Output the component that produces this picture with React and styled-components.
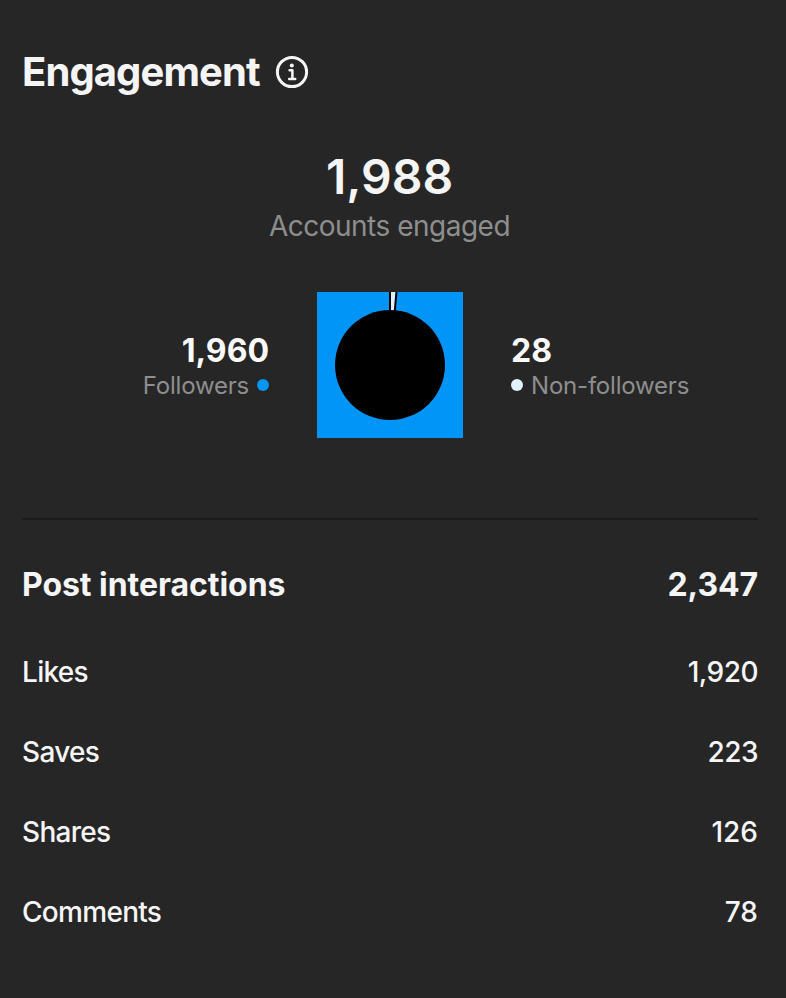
import React from 'react'
import styled, { createGlobalStyle } from 'styled-components'

const rows = [
  { label: 'Likes', value: '1,920', valueSpacing: '-0.5px' },
  { label: 'Saves', value: '223' },
  { label: 'Shares', value: '126', valueSpacing: '0' },
  { label: 'Comments', value: '78', valueSpacing: '0' },
]

const InfoIcon = () => (
  <svg width="34" height="34" viewBox="0 0 34 34" fill="none" stroke="#f5f5f5">
    <circle cx="17" cy="17" r="14.6" strokeWidth="3" />
    <circle cx="16.8" cy="10.6" r="2" fill="#f5f5f5" stroke="none" />
    <path d="M14.6 15.2h2.8v8.6M14.2 24h6" strokeWidth="2.5" strokeLinecap="round" strokeLinejoin="round" />
  </svg>
)

const Donut = () => (
  <svg width="146" height="146" viewBox="0 0 146 146">
    <rect width="146" height="146" fill="#0095f6" />
    <path d="M73 73V-4L79.8 -4Z" fill="#e0f1ff" stroke="#000" strokeWidth="2" />
    <circle cx="73" cy="73" r="55" fill="#000" />
  </svg>
)

const App = () => (
  <Page>
    <GlobalStyle />
    <Header>
      <Title>Engagement</Title>
      <InfoIcon />
    </Header>
    <Total>1,988</Total>
    <TotalLabel>Accounts engaged</TotalLabel>
    <Breakdown>
      <Group $align="flex-end">
        <GroupValue>1,960</GroupValue>
        <GroupLabel>
          Followers
          <Dot $color="#0095f6" />
        </GroupLabel>
      </Group>
      <Donut />
      <Group $align="flex-start">
        <GroupValue>28</GroupValue>
        <GroupLabel>
          <Dot $color="#e0f1ff" />
          Non-followers
        </GroupLabel>
      </Group>
    </Breakdown>
    <Divider />
    <SectionRow>
      <SectionTitle>Post interactions</SectionTitle>
      <SectionValue>2,347</SectionValue>
    </SectionRow>
    {rows.map(row => (
      <Row key={row.label}>
        <RowLabel>{row.label}</RowLabel>
        <RowValue $spacing={row.valueSpacing}>{row.value}</RowValue>
      </Row>
    ))}
  </Page>
)

export default App

const GlobalStyle = createGlobalStyle`
  body {
    margin: 0;
    background: #262626;
  }
`

const Page = styled.div`
  box-sizing: border-box;
  width: 786px;
  height: 998px;
  padding: 48px 28px 0 22px;
  overflow: hidden;
  background: #262626;
  color: #f5f5f5;
  font-family: Inter, 'Liberation Sans', sans-serif;
  white-space: nowrap;
`

const Header = styled.div`
  display: flex;
  align-items: center;
  height: 48px;
  gap: 15px;
`

const Title = styled.h1`
  margin: 0;
  padding-bottom: 2px;
  font-size: 40px;
  font-weight: 700;
  letter-spacing: -0.9px;
`

const Total = styled.div`
  margin-top: 52px;
  padding-right: 1px;
  line-height: 57px;
  font-size: 48px;
  font-weight: 600;
  text-align: center;
`

const TotalLabel = styled.div`
  margin-top: 3px;
  padding-right: 1px;
  line-height: 36px;
  font-size: 28px;
  letter-spacing: -0.5px;
  color: #8e8e8e;
  text-align: center;
`

const Breakdown = styled.div`
  display: grid;
  grid-template-columns: 1fr 146px 1fr;
  align-items: center;
  column-gap: 48px;
  height: 146px;
  margin-top: 48px;
`

const Group = styled.div`
  display: flex;
  flex-direction: column;
  align-items: ${props => props.$align};
  padding-top: 4px;
`

const GroupValue = styled.div`
  line-height: 38px;
  font-size: 32px;
  font-weight: 700;
  color: #fafafa;
`

const GroupLabel = styled.div`
  display: flex;
  align-items: center;
  gap: 8px;
  line-height: 32px;
  font-size: 24px;
  letter-spacing: -0.2px;
  color: #8e8e8e;
`

const Dot = styled.span`
  width: 12px;
  height: 12px;
  margin-bottom: 2px;
  border-radius: 50%;
  background: ${props => props.$color};
`

const Divider = styled.div`
  height: 2px;
  margin-top: 80px;
  background: #1b1b1b;
`

const SectionRow = styled.div`
  display: flex;
  justify-content: space-between;
  margin: 45px 0 27px;
  line-height: 40px;
  font-size: 32px;
  font-weight: 700;
`

const SectionTitle = styled.h2`
  margin: 0;
  font-size: inherit;
  letter-spacing: -0.05px;
`

const SectionValue = styled.span`
  letter-spacing: -0.1px;
`

const Row = styled.div`
  display: flex;
  align-items: center;
  justify-content: space-between;
  height: 80px;
  font-size: 28px;
  font-weight: 450;
`

const RowLabel = styled.span`
  letter-spacing: -0.7px;
`

const RowValue = styled.span`
  letter-spacing: ${props => props.$spacing || '-0.5px'};
`
